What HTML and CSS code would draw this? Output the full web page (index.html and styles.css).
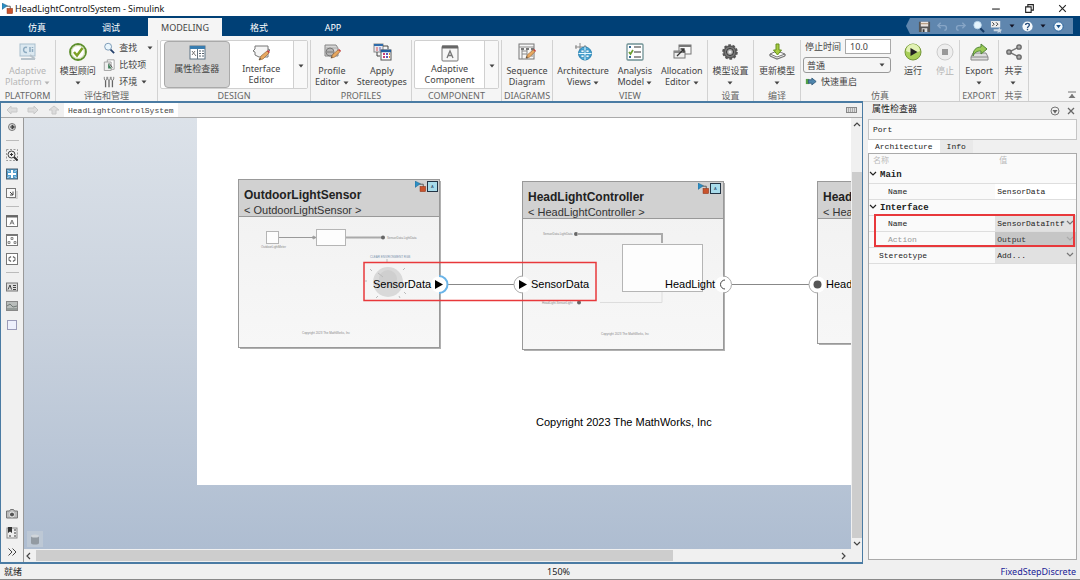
FILE: index.html
```html
<!DOCTYPE html>
<html lang="en">
<head>
  <meta charset="UTF-8">
  <title>HeadLightControlSystem - Simulink</title>
  <link rel="stylesheet" href="styles.css">
</head>
<body>
  <svg class="defs" aria-hidden="true">
    <defs>
      <symbol id="caret" viewBox="0 0 6 4"><path d="M0.5 0.5h5L3 3.5z" fill="currentColor"/></symbol>
      <symbol id="chevron" viewBox="0 0 8 6"><path d="M1 1l3 3 3-3" fill="none" stroke="currentColor" stroke-width="1.2"/></symbol>
      <symbol id="pencil" viewBox="0 0 12 12">
        <path d="M1 11l2-4 6-5 2 2-6 6z" fill="#e8a860" stroke="#95683a" stroke-width=".7"/>
        <path d="M9 2l2 2 1-1-2-2z" fill="#c9373c"/>
        <path d="M1 11l1-2 1 1z" fill="#333"/>
      </symbol>
      <symbol id="model" viewBox="0 0 12 12">
        <path d="M0 0l6 3-6 4z" fill="#2d8fc4" stroke="#1d5f88" stroke-width=".5"/>
        <path d="M5 3.5h4v3" fill="none" stroke="#555"/>
        <rect x="5.5" y="6" width="6" height="5.5" fill="#c9532c" stroke="#8d3417" stroke-width=".6"/>
      </symbol>
    </defs>
  </svg>

  <header class="titlebar">
    <svg class="app-icon"><use href="#model"/></svg>
    <h1>HeadLightControlSystem - Simulink</h1>
    <div class="window-buttons">
      <button aria-label="Minimize"><svg viewBox="0 0 10 10"><path d="M1 5.5h7"/></svg></button>
      <button aria-label="Restore"><svg viewBox="0 0 10 10"><path d="M1.5 3.5h5v5h-5zM3.5 3.5v-2h5v5h-2"/></svg></button>
      <button aria-label="Close"><svg viewBox="0 0 10 10"><path d="M2 2l6 6M8 2L2 8"/></svg></button>
    </div>
  </header>

  <nav class="tabs">
    <button>仿真</button>
    <button>调试</button>
    <button class="active">MODELING</button>
    <button>格式</button>
    <button>APP</button>
    <div class="quick">
      <button aria-label="Save"><svg viewBox="0 0 14 14"><path d="M1 2h12v11H1z" fill="#555"/><path d="M3 2h8v5H3z" fill="#e9e4e0"/><path d="M3 4h8" stroke="#a86"/><path d="M4 9h6v4H4z" fill="#ddd"/><path d="M5 10h2v3H5z" fill="#333"/></svg></button>
      <button aria-label="Undo"><svg viewBox="0 0 14 14"><path d="M5 3L2 6l3 3M2.5 6H9c3 0 3 5 0 5" fill="none" stroke="#86a5c6" stroke-width="1.5"/></svg></button>
      <button aria-label="Redo"><svg viewBox="0 0 14 14"><path d="M9 3l3 3-3 3M11.5 6H5c-3 0-3 5 0 5" fill="none" stroke="#86a5c6" stroke-width="1.5"/></svg></button>
      <button aria-label="Find"><svg viewBox="0 0 14 14"><path d="M8 8l5 5" stroke="#173b66" stroke-width="2.2"/><circle cx="6" cy="5.5" r="4" fill="#e4f4fd" stroke="#bdd9ee"/></svg></button>
      <button aria-label="Shortcuts"><svg viewBox="0 0 14 14"><path d="M1 1h10v7H1z" fill="#eee"/><path d="M2.5 2.5l2 2-2 2M6.5 2.5l2 2-2 2" fill="none" stroke="#333"/><path d="M4 10h5l1-2 1 2 2 .5-1.500 1.500.5 2-2-1-2 1 .3-2H4z" fill="#c8d5e2"/></svg></button>
      <svg class="caret"><use href="#caret"/></svg>
      <button aria-label="Help"><svg viewBox="0 0 14 14"><circle cx="7" cy="7" r="5.5" fill="#f4f8fb"/><path d="M5 5.5c0-2.500 4-2.500 4 0C9 7 7 7 7 8.500M7 9.500v1.500" fill="none" stroke="#2b5180" stroke-width="1.5"/></svg></button>
      <svg class="caret"><use href="#caret"/></svg>
      <button aria-label="More"><svg viewBox="0 0 14 14"><circle cx="7" cy="7" r="5" fill="#eef5fb" stroke="#23609c"/><path d="M4.5 5.5h5L7 9z" fill="#174f86"/></svg></button>
    </div>
  </nav>

  <div class="ribbon">
    <section class="group">
      <div class="tools">
        <button class="tool" disabled>
          <svg viewBox="0 0 20 20"><rect x="2" y="2" width="15" height="12" fill="#dbe8f0" stroke="#a9bfce"/><path d="M9 5.5c-4-2-5 6 0 5M12 5v5M14.5 5v1M14.5 7v3" fill="none" stroke="#8eabc0" stroke-width="1.5"/><path d="M3 17h14M12 13l5 4" stroke="#b8c3cb" stroke-width="2"/></svg>
          <span>Adaptive<br>Platform <svg class="caret"><use href="#caret"/></svg></span>
        </button>
      </div>
      <h2>PLATFORM</h2>
    </section>

    <section class="group">
      <div class="tools">
        <button class="tool">
          <svg viewBox="0 0 20 20"><circle cx="10" cy="10" r="8" fill="#fff" stroke="#5c8f2c" stroke-width="1.8"/><circle cx="10" cy="10" r="6.5" fill="none" stroke="#c7d7a5"/><path d="M6 10l3 3.500L14.500 6" fill="none" stroke="#7ea126" stroke-width="2.5"/></svg>
          <span>模型顾问<br><svg class="caret"><use href="#caret"/></svg></span>
        </button>
        <div class="stack">
          <button><svg viewBox="0 0 14 14"><path d="M8 8l5 5" stroke="#24406b" stroke-width="2"/><circle cx="6" cy="5.5" r="4" fill="#eaf6fc" stroke="#6e8fae"/></svg>查找<svg class="caret end"><use href="#caret"/></svg></button>
          <button><svg viewBox="0 0 14 14"><path d="M5 1h8v11H5z" fill="#fff" stroke="#999"/><path d="M1.5 3.5h8v10h-8z" fill="#eee" stroke="#999"/><path d="M6 5v6h4z" fill="#3f7f59"/><path d="M7 5l4 5" stroke="#444"/></svg>比较项</button>
          <button><svg viewBox="0 0 14 14"><path d="M3 5v8M7 5v8M11 5v8" stroke="#666" stroke-width="1.5"/><path d="M1.5 1v2.500c0 2 3 2 3 0V1M5.5 1v2.500c0 2 3 2 3 0V1M9.5 1v2.500c0 2 3 2 3 0V1" fill="none" stroke="#777"/></svg>环境<svg class="caret"><use href="#caret"/></svg></button>
        </div>
      </div>
      <h2>评估和管理</h2>
    </section>

    <section class="group">
      <div class="gallery">
        <button class="tool pressed">
          <svg viewBox="0 0 20 20"><rect x="3" y="3" width="15" height="13" fill="#fff" stroke="#5e7485"/><path d="M3 3h15v3H3z" fill="#397db0"/><path d="M10.5 6v10" stroke="#65737e"/><path d="M5 8l4 5M8 8l-3 4" stroke="#777"/><path d="M12 8h2M15 8h2M12 10.5h2M15 10.5h2M12 13h2M15 13h2" stroke="#52606c"/></svg>
          <span>属性检查器</span>
        </button>
        <button class="tool">
          <svg viewBox="0 0 20 20"><path d="M4 3h13v11H8l-4-2V9L2 8l2-2z" fill="#f5f5f5" stroke="#777"/><path d="M17 6l2 1-2 2" fill="none" stroke="#777"/><use href="#pencil" x="7" y="6" width="12" height="12"/></svg>
          <span>Interface<br>Editor</span>
        </button>
        <button class="expand" aria-label="More design tools"><svg class="caret"><use href="#caret"/></svg></button>
      </div>
      <h2>DESIGN</h2>
    </section>

    <section class="group">
      <div class="tools">
        <button class="tool">
          <svg viewBox="0 0 20 20"><path d="M3 3h11l2 3v8H3z" fill="#d7d7d7" stroke="#858585"/><path d="M3 6h13" stroke="#aaa"/><circle cx="8" cy="10" r="4" fill="#f5f5f5" stroke="#777"/><path d="M8 6v8M4 10h8M6 7v6M10 7v6" stroke="#777"/><use href="#pencil" x="8" y="6" width="11" height="11"/></svg>
          <span>Profile<br>Editor <svg class="caret"><use href="#caret"/></svg></span>
        </button>
        <button class="tool">
          <svg viewBox="0 0 20 20"><rect x="2" y="2" width="9" height="8" fill="#e8e8f0" stroke="#888"/><path d="M2 3h9" stroke="#2f6cab" stroke-width="2"/><path d="M4 6h2M4 8h2" stroke="#d55"/><path d="M7 6h2M7 8h2" stroke="#66b"/><path d="M11 4h5v3M5 10v4h3" fill="none" stroke="#444"/><rect x="9" y="8" width="10" height="10" fill="#fff" stroke="#555"/><path d="M9 9h10" stroke="#245f9e" stroke-width="2.5"/><path d="M11 12h2M11 15h2" stroke="#cc3d73" stroke-width="2"/><path d="M14 12h2M14 15h2" stroke="#6558bd" stroke-width="2"/><path d="M17 12h1M17 15h1" stroke="#e28a33" stroke-width="2"/></svg>
          <span>Apply<br>Stereotypes</span>
        </button>
      </div>
      <h2>PROFILES</h2>
    </section>

    <section class="group">
      <div class="gallery">
        <button class="tool">
          <svg viewBox="0 0 20 20"><rect x="2" y="3" width="16" height="15" rx="1" fill="#f6f6f6" stroke="#777"/><path d="M2 4h16" stroke="#666" stroke-width="3"/><path d="M7 15l3-7 3 7M8 12.5h4" fill="none" stroke="#777" stroke-width="1.3"/></svg>
          <span>Adaptive<br>Component</span>
        </button>
        <button class="expand" aria-label="More components"><svg class="caret"><use href="#caret"/></svg></button>
      </div>
      <h2>COMPONENT</h2>
    </section>

    <section class="group">
      <div class="tools">
        <button class="tool">
          <svg viewBox="0 0 20 20"><rect x="2" y="2" width="15" height="15" fill="#f7f7f7" stroke="#777"/><path d="M2 5h15M5 7v10M10 7v10M15 7v8M5 9h5M10 12H5" fill="none" stroke="#888"/><path d="M4 7h3M9 7h3M14 7h3" stroke="#777" stroke-width="2"/><use href="#pencil" x="8" y="6" width="11" height="11"/></svg>
          <span>Sequence<br>Diagram</span>
        </button>
      </div>
      <h2>DIAGRAMS</h2>
    </section>

    <section class="group">
      <div class="tools">
        <button class="tool">
          <svg viewBox="0 0 20 20"><path d="M2 5h12M7 1v14M3 3v4M12 3v3" stroke="#888"/><circle cx="12" cy="11.5" r="6.5" fill="#4aa9d8" stroke="#277eae"/><path d="M12 5v13M5.5 11.5h13" stroke="#e9f8ff"/><path d="M8 8h3v2.500H8zM13 8h3v2.500h-3zM8 13h3v2.500H8zM13 13h3v2.500h-3z" fill="#eaf7fd" stroke="#277eae" stroke-width=".6"/></svg>
          <span>Architecture<br>Views <svg class="caret"><use href="#caret"/></svg></span>
        </button>
        <button class="tool">
          <svg viewBox="0 0 20 20"><rect x="2" y="2" width="16" height="16" rx="1" fill="#fff" stroke="#6f9194" stroke-width="1.3"/><path d="M9 5h7M9 10h7M9 15h7" stroke="#777" stroke-width="1.5"/><path d="M4 5h2M4 15h2" stroke="#376d97" stroke-width="2"/><path d="M4 10l1.500 2L8 8" fill="none" stroke="#6c9e31" stroke-width="1.7"/></svg>
          <span>Analysis<br>Model <svg class="caret"><use href="#caret"/></svg></span>
        </button>
        <button class="tool">
          <svg viewBox="0 0 20 20"><rect x="7" y="3" width="12" height="9" fill="#f9f9f9" stroke="#777"/><path d="M7 4h12" stroke="#777" stroke-width="2"/><rect x="2" y="9" width="11" height="7" fill="#eee" stroke="#777"/><path d="M2 10h11" stroke="#888" stroke-width="2"/><path d="M5 14l7-7M8.5 7H12v3.500" fill="none" stroke="#333" stroke-width="1.3"/></svg>
          <span>Allocation<br>Editor <svg class="caret"><use href="#caret"/></svg></span>
        </button>
      </div>
      <h2>VIEW</h2>
    </section>

    <section class="group">
      <div class="tools">
        <button class="tool">
          <svg viewBox="0 0 20 20"><circle cx="10" cy="10" r="6.8" fill="#777" stroke="#555" stroke-width="2" stroke-dasharray="2.6 1.7"/><circle cx="10" cy="10" r="5.8" fill="#777" stroke="#555"/><circle cx="10" cy="10" r="3.5" fill="#aaa" stroke="#333"/><circle cx="10" cy="10" r="1.5" fill="#eee"/></svg>
          <span>模型设置<br><svg class="caret"><use href="#caret"/></svg></span>
        </button>
      </div>
      <h2>设置</h2>
    </section>

    <section class="group">
      <div class="tools">
        <button class="tool">
          <svg viewBox="0 0 20 20"><path d="M3 12l7-3 8 3-8 3z" fill="#fff" stroke="#777"/><path d="M3 14l7 3 8-3M3 12v2M18 12v2" fill="none" stroke="#777" stroke-width="1.3"/><path d="M9 2h3v6h2.500L10.500 13 6.500 8H9z" fill="#a7cb40" stroke="#66901d"/></svg>
          <span>更新模型<br><svg class="caret"><use href="#caret"/></svg></span>
        </button>
      </div>
      <h2>编译</h2>
    </section>

    <section class="group">
      <div class="tools sim">
        <div class="sim-form">
          <label for="stopTime">停止时间</label>
          <input type="text" id="stopTime" value="10.0">
          <div class="combo">
            <select id="simMode" aria-label="仿真模式"><option>普通</option></select>
            <svg class="caret"><use href="#caret"/></svg>
          </div>
          <button class="restart"><svg viewBox="0 0 14 10"><path d="M1 2h4v6H1z" fill="#55a246"/><path d="M4 3h4V1l5 4-5 4V7H4z" fill="#4f86ad" stroke="#315a7b"/></svg>快速重启</button>
        </div>
        <button class="tool">
          <svg viewBox="0 0 20 20"><circle cx="10" cy="10" r="8" fill="#a8cf58" stroke="#76983a"/><path d="M3 9a7 7 0 0 1 14 0c-4 2-10 2-14 0z" fill="#e2f2b5"/><path d="M7.5 6l7 4-7 4z" fill="#222"/></svg>
          <span>运行</span>
        </button>
        <button class="tool" disabled>
          <svg viewBox="0 0 20 20"><circle cx="10" cy="10" r="8" fill="#eee" stroke="#ccc"/><path d="M7 7h6v6H7z" fill="#999"/></svg>
          <span>停止</span>
        </button>
      </div>
      <h2>仿真</h2>
    </section>

    <section class="group">
      <div class="tools">
        <button class="tool">
          <svg viewBox="0 0 20 20"><path d="M4 11h13l2 4v3H2v-3z" fill="#ddd" stroke="#888"/><path d="M2 15h17" stroke="#888"/><path d="M4 14c0-6 3-9 8-9V2l6 5-6 5V9c-4 0-6 1-8 5z" fill="#9bca56" stroke="#4f8337"/></svg>
          <span>Export<br><svg class="caret"><use href="#caret"/></svg></span>
        </button>
      </div>
      <h2>EXPORT</h2>
    </section>

    <section class="group">
      <div class="tools">
        <button class="tool">
          <svg viewBox="0 0 20 20"><path d="M15 5L5 10l10 5" fill="none" stroke="#777" stroke-width="1.5"/><g fill="#aaa" stroke="#666" stroke-width="1.3"><circle cx="15" cy="5" r="2.2"/><circle cx="5" cy="10" r="2.2"/><circle cx="15" cy="15" r="2.2"/></g></svg>
          <span>共享<br><svg class="caret"><use href="#caret"/></svg></span>
        </button>
      </div>
      <h2>共享</h2>
    </section>

    <div class="ribbon-end">
      <button aria-label="Minimize toolstrip"><svg viewBox="0 0 8 8"><path d="M0 1h8M4 3v4" stroke="#777"/><path d="M0.5 7L4 3l3.500 4z" fill="#777"/></svg></button>
    </div>
  </div>

  <main class="workspace">
    <section class="editor">
      <nav class="address">
        <button aria-label="Back"><svg viewBox="0 0 12 10"><path d="M1 5l4-4v2h6v4H5v2z"/></svg></button>
        <button aria-label="Forward"><svg viewBox="0 0 12 10"><path d="M11 5L7 1v2H1v4h6v2z"/></svg></button>
        <button aria-label="Up"><svg viewBox="0 0 12 10"><path d="M6 1l5 4H8v4H4V5H1z"/></svg></button>
        <a href="#model-root">HeadLightControlSystem</a>
        <button class="keyboard" aria-label="Keyboard"><svg viewBox="0 0 12 8"><rect x=".5" y="1.5" width="10" height="5" fill="#ddd" stroke="#888"/><path d="M2 3h8M2 5h7" stroke="#777" stroke-dasharray="1 1"/></svg></button>
      </nav>

      <aside class="palette">
        <button aria-label="Hide browser"><svg viewBox="0 0 12 12"><circle cx="6" cy="6" r="3.5" fill="#ddd" stroke="#777"/><path d="M4 6h3M6 4l2.500 2L6 8z" stroke="#444" fill="#444"/></svg></button>
        <hr>
        <button aria-label="Zoom"><svg viewBox="0 0 12 12"><path d="M.5 .5h11v11H.5z" fill="none" stroke="#999" stroke-dasharray="2 1.5"/><circle cx="5.5" cy="5.5" r="3.5" fill="#eee" stroke="#444"/><path d="M8 8l3.500 3.500" stroke="#333" stroke-width="2"/><path d="M5.5 4v3M4 5.500h3" stroke="#333"/></svg></button>
        <button aria-label="Fit to view"><svg viewBox="0 0 12 12"><rect x=".5" y="1" width="11" height="10" fill="#4f9bcb" stroke="#4d6070"/><path d="M5 2h2v3h3v2H7v3H5V7H2V5h3z" fill="#fff"/><path d="M1.500 2l2 2M10.500 2l-2 2M1.500 10l2-2M10.500 10l-2-2" stroke="#d8ebf7"/></svg></button>
        <button aria-label="Sample times"><svg viewBox="0 0 12 12"><rect x=".5" y="1.5" width="9" height="9" fill="#f8f8f8" stroke="#777"/><path d="M4 5l3 3M7 4.500V8H4" fill="none" stroke="#444"/><path d="M11 4v8H3" fill="none" stroke="#bbb"/></svg></button>
        <hr>
        <button aria-label="Component"><svg viewBox="0 0 12 12"><rect x=".5" y=".5" width="11" height="11" fill="#fff" stroke="#777"/><path d="M0 1.500h12" stroke="#666" stroke-width="2"/><path d="M4 9.500L6 5l2 4.500M5 8h2" fill="none" stroke="#777"/></svg></button>
        <button aria-label="Reference component"><svg viewBox="0 0 12 12"><rect x=".5" y=".5" width="11" height="11" fill="#fff" stroke="#777"/><path d="M0 1h12" stroke="#777" stroke-width="2"/><path d="M5 3.500h2v2H5zM2 7.500h2v2H2zM8 7.500h2v2H8z" fill="#eee" stroke="#888"/></svg></button>
        <button aria-label="Adapter"><svg viewBox="0 0 12 12"><rect x=".5" y=".5" width="11" height="11" fill="#fff" stroke="#777"/><path d="M2.500 5.500L5 3.500M7 3.500l2.500 2M9.500 6.500L7 8.500M5 8.500l-2.500-2" stroke="#666" stroke-width="1.3"/></svg></button>
        <hr>
        <button aria-label="Annotation"><svg viewBox="0 0 12 12"><rect x=".5" y="2" width="11" height="8" fill="#ddd" stroke="#777"/><path d="M2 8.500L4 4l1.500 4.500M7 4.500h3M7 6.500h3M7 8.500h3" fill="none" stroke="#444"/></svg></button>
        <button aria-label="Image"><svg viewBox="0 0 12 12"><rect x=".5" y="1.5" width="11" height="9" fill="#b9bdbb" stroke="#888"/><path d="M1 6l3-2 3 3 4-1M1 9h10" fill="none" stroke="#707a77"/></svg></button>
        <button aria-label="Area"><svg viewBox="0 0 12 12"><rect x="1.5" y="1.5" width="9" height="9" fill="#eef0fc" stroke="#9b9bb8"/></svg></button>
        <button class="bottom" aria-label="Snapshot"><svg viewBox="0 0 12 12"><path d="M.5 3h3l1-1.500h3l1 1.500h3v7H.5z" fill="#bbb" stroke="#777"/><circle cx="6" cy="6.5" r="2.5" fill="#555" stroke="#eee"/></svg></button>
        <button aria-label="Bookmarks"><svg viewBox="0 0 12 12"><rect x="1" y="1" width="10" height="10" fill="#eee" stroke="#888"/><path d="M2 0h4v6L4 4.500 2 6z" fill="#333"/><path d="M8 3h2M8 6h2M3 9h2M8 9h2" stroke="#777" stroke-width="1.5"/></svg></button>
        <button aria-label="Expand palette"><svg viewBox="0 0 12 12"><path d="M2.500 2.500L6 6 2.500 9.500M6.500 2.500L10 6 6.500 9.500" fill="none" stroke="#444"/></svg></button>
      </aside>

      <div class="canvas" id="model-root">
        <svg class="diagram" width="827" height="431" viewBox="24 118 827 431">
          <defs>
            <linearGradient id="body" x1="0" y1="0" x2="0" y2="1"><stop offset="0" stop-color="#f1f1f1"/><stop offset="1" stop-color="#f7f7f7"/></linearGradient>
          </defs>
          <path d="M197 118h800v367H197z" fill="#fff"/>

          <!-- OutdoorLightSensor -->
          <g class="block">
            <rect class="shadow" x="240" y="181" width="201" height="168"/>
            <rect class="frame" x="238.5" y="179.5" width="201" height="168"/>
            <rect class="head" x="238.5" y="179.5" width="201" height="37"/>
            <text class="name" x="244" y="199">OutdoorLightSensor</text>
            <text class="type" x="244" y="214">&lt; OutdoorLightSensor &gt;</text>
            <use href="#model" x="415" y="181" width="11" height="11"/>
            <rect class="badge" x="427.5" y="181.5" width="10" height="10"/>
            <text class="badge-text" x="431" y="188">A</text>
          </g>
          <g class="preview">
            <rect x="266.5" y="231.5" width="12" height="12"/>
            <path d="M279 237.500h36M313 236l3 1.500-3 1.500z"/>
            <rect x="316.5" y="229.5" width="29" height="16"/>
            <path class="bus" d="M346 237.500h36"/>
            <circle class="dot" cx="383" cy="237.5" r="2"/>
            <text x="387" y="239">SensorData.LightData</text>
            <text x="261" y="248">OutdoorLightMeter</text>
            <text class="blue" x="370" y="258">CLEAR ENVIRONMENT RGB</text>
            <circle class="knob" cx="388" cy="282" r="15"/>
            <circle class="knob-top" cx="388" cy="279" r="9"/>
            <path class="ticks" d="M387 262v-3M403 270l2-2M372 271l-2-2M367 281h-2M404 292l2 2M378 296l-2 2M399 296l1 2M378 273l5 4"/>
            <text x="302" y="334">Copyright 2023 The MathWorks, Inc</text>
          </g>

          <!-- HeadLightController -->
          <g class="block">
            <rect class="shadow" x="524" y="183" width="201" height="168"/>
            <rect class="frame" x="522.5" y="181.5" width="201" height="168"/>
            <rect class="head" x="522.5" y="181.5" width="201" height="37"/>
            <text class="name" x="528" y="201">HeadLightController</text>
            <text class="type" x="528" y="216">&lt; HeadLightController &gt;</text>
            <use href="#model" x="698" y="183" width="11" height="11"/>
            <rect class="badge" x="710.5" y="183.5" width="10" height="10"/>
            <text class="badge-text" x="714" y="190">A</text>
          </g>
          <g class="preview">
            <text x="543" y="235">SensorData.LightData</text>
            <circle class="dot" cx="576" cy="234" r="2"/>
            <path class="bus" d="M577 234h85v9"/>
            <path class="faint" d="M600 302.500h62v-12"/>
            <rect x="622.5" y="244.5" width="80" height="47"/>
            <text x="542" y="304">HeadLight.SensorLight</text>
            <circle class="dot" cx="579" cy="302.5" r="2"/>
            <text x="601" y="335">Copyright 2023 The MathWorks, Inc</text>
          </g>

          <!-- third block, runs past the right edge -->
          <g class="block">
            <rect class="shadow" x="819" y="183" width="201" height="162"/>
            <rect class="frame" x="817.5" y="181.5" width="201" height="162"/>
            <rect class="head" x="817.5" y="181.5" width="201" height="37"/>
            <text class="name" x="823" y="201">Head</text>
            <text class="type" x="823" y="216">&lt; Hea</text>
          </g>

          <!-- connections and ports -->
          <path class="wire" d="M448 284.500h66M732 284.500h77"/>
          <g class="port">
            <circle cx="439" cy="284.5" r="8"/>
            <circle cx="522.5" cy="284.5" r="8"/>
            <circle cx="723" cy="284.5" r="8"/>
            <circle cx="817.5" cy="284.5" r="8"/>
          </g>
          <path class="rim selected" d="M439 276a8.500 8.500 0 0 1 0 17"/>
          <path class="rim" d="M522.500 276a8.500 8.500 0 0 0 0 17M723 276a8.500 8.500 0 0 1 0 17M817.500 276a8.500 8.500 0 0 0 0 17"/>
          <path d="M435 280l8 4.500-8 4.500z"/>
          <path d="M519 280l8 4.500-8 4.500z"/>
          <path d="M725 280a4.500 4.500 0 0 0 0 9" fill="none" stroke="#444"/>
          <circle cx="817.5" cy="284.5" r="4" fill="#555"/>
          <text class="label" x="373" y="288">SensorData</text>
          <text class="label" x="531" y="288">SensorData</text>
          <text class="label" x="665" y="288">HeadLight</text>
          <text class="label" x="826" y="288">Head</text>
          <text class="label" x="536" y="426">Copyright 2023 The MathWorks, Inc</text>
          <rect class="mark" x="364" y="262.5" width="232" height="38"/>
        </svg>
        <button class="model-data" aria-label="Model data"><svg viewBox="0 0 14 14"><path d="M3 4v7c0 2 8 2 8 0V4z" fill="#929aa2"/><ellipse cx="7" cy="4" rx="4" ry="1.5" fill="#d0d5da"/></svg></button>
      </div>

      <div class="scroll vertical">
        <svg class="up"><use href="#chevron"/></svg>
        <div class="thumb"></div>
        <svg><use href="#chevron"/></svg>
      </div>
      <div class="scroll horizontal">
        <svg class="left"><use href="#chevron"/></svg>
        <div class="thumb"></div>
        <svg class="right"><use href="#chevron"/></svg>
      </div>
    </section>

    <aside class="inspector">
      <header>
        <h2>属性检查器</h2>
        <button aria-label="Panel menu"><svg viewBox="0 0 10 10"><circle cx="5" cy="5" r="4" fill="none" stroke="#777"/><path d="M2.500 4h5L5 7.500z" fill="#666"/></svg></button>
        <button aria-label="Close panel"><svg viewBox="0 0 10 10"><path d="M2 2l6 6M8 2L2 8" stroke="#666" stroke-width="1.3"/></svg></button>
      </header>
      <div class="object-name">Port</div>
      <div class="inspector-tabs">
        <button class="active">Architecture</button>
        <button>Info</button>
      </div>
      <div class="properties">
        <table>
          <thead>
            <tr><th>名称</th><th>值</th></tr>
          </thead>
          <tbody>
            <tr class="category"><th colspan="2"><svg><use href="#chevron"/></svg>Main</th></tr>
            <tr><td class="child">Name</td><td><input type="text" aria-label="Name" value="SensorData"></td></tr>
            <tr class="category"><th colspan="2"><svg><use href="#chevron"/></svg>Interface</th></tr>
            <tr><td class="child">Name</td><td class="pick"><div class="combo"><select aria-label="Interface name"><option>SensorDataIntf</option></select><svg><use href="#chevron"/></svg></div></td></tr>
            <tr class="off"><td class="child">Action</td><td class="pick"><div class="combo"><select aria-label="Action" disabled><option>Output</option></select><svg><use href="#chevron"/></svg></div></td></tr>
            <tr><td class="root">Stereotype</td><td class="pick"><div class="combo"><select aria-label="Stereotype"><option>Add...</option></select><svg><use href="#chevron"/></svg></div></td></tr>
          </tbody>
        </table>
        <div class="highlight"></div>
      </div>
    </aside>
  </main>

  <footer class="status">
    <span>就绪</span>
    <span>150%</span>
    <a href="#solver">FixedStepDiscrete</a>
  </footer>
</body>
</html>
```

FILE: styles.css
```css
* {
  box-sizing: border-box;
}
body {
  margin: 0;
  height: 100vh;
  display: flex;
  flex-direction: column;
  overflow: hidden;
  background: #f0f0f0;
  color: #444;
  font-family: "Noto Sans", "Noto Sans CJK SC", sans-serif;
  font-size: 9px;
  line-height: 11px;
}
h1, h2 {
  margin: 0;
  font-size: inherit;
  font-weight: normal;
}
button, input, select {
  margin: 0;
  padding: 0;
  border: none;
  background: none;
  color: inherit;
  font: inherit;
}
svg {
  display: block;
  flex: none;
}
a {
  color: inherit;
  text-decoration: none;
}
.defs {
  position: absolute;
  width: 0;
  height: 0;
}
.caret {
  display: inline-block;
  width: 6px;
  height: 4px;
  vertical-align: middle;
}

/* title bar */
.titlebar {
  height: 16px;
  display: flex;
  align-items: center;
  gap: 2px;
  padding: 0 12px 0 2px;
  background: #fff;
  color: #111;
}
.app-icon {
  width: 11px;
  height: 11px;
}
.window-buttons {
  display: flex;
  gap: 22px;
  margin-left: auto;
}
.window-buttons svg {
  width: 11px;
  height: 11px;
  fill: none;
  stroke: #222;
}

/* toolstrip tabs */
.tabs {
  height: 20px;
  display: flex;
  align-items: flex-end;
  padding-right: 7px;
  background: #004076;
  color: #fff;
}
.tabs > button {
  width: 74px;
  height: 18px;
}
.tabs > .active {
  background: #f5f5f5;
  color: #444;
}
.quick {
  display: flex;
  align-items: center;
  gap: 5px;
  height: 16px;
  margin: 0 0 2px auto;
  padding: 0 8px 0 12px;
  background: #5f86ae;
  color: #112;
  clip-path: polygon(4px 0, 100% 0, 100% 100%, 4px 100%, 0 50%);
}
.quick .caret {
  margin: 0 1px;
}
.quick button svg {
  width: 13px;
  height: 13px;
}

/* ribbon */
.ribbon {
  height: 65px;
  flex: none;
  display: grid;
  grid-template-columns: 56px 102px 153px 101px 90px 51px 155px 46px 47px 159px 39px 30px 1fr;
  padding-top: 4px;
  background: #f5f5f5;
}
.group {
  display: flex;
  flex-direction: column;
  justify-content: space-between;
  border-right: 1px solid #d2d2d2;
}
.group h2 {
  text-align: center;
  color: #666;
  white-space: nowrap;
}
.tools {
  display: flex;
  justify-content: space-around;
  padding-top: 2px;
}
.tools.sim {
  justify-content: flex-start;
  gap: 12px;
  padding-left: 2px;
}
.tool {
  display: flex;
  flex-direction: column;
  align-items: center;
  gap: 3px;
  white-space: nowrap;
}
.tool > svg {
  width: 20px;
  height: 20px;
}
.tool:disabled {
  color: #b5b5b5;
}
.stack {
  display: flex;
  flex-direction: column;
  gap: 4px;
  width: 50px;
  margin-top: -1px;
}
.stack button {
  display: flex;
  align-items: center;
  gap: 4px;
  height: 13px;
}
.stack button svg:first-child {
  width: 12px;
  height: 12px;
}
.stack .end {
  margin-left: auto;
}
.gallery {
  display: flex;
  height: 49px;
  margin: 0 2px;
  border: 1px solid #d0d0d0;
  border-radius: 2px;
  background: #fff;
}
.gallery .tool {
  flex: 1;
  padding-top: 2px;
  gap: 0;
}
.gallery .pressed {
  margin-left: 3px;
  padding-top: 1px;
  border: 1px solid #aaa;
  border-radius: 4px;
  background: #d3d3d3;
}
.expand {
  width: 14px;
  border-left: 1px solid #d0d0d0;
  background: #f8f8f8;
}
.sim-form {
  display: grid;
  grid-template-columns: 42px 46px;
  row-gap: 3px;
  align-items: center;
  margin-top: -3px;
}
.sim-form label {
  padding-left: 2px;
}
.sim-form input {
  width: 46px;
  height: 15px;
  padding-left: 4px;
  border: 1px solid #aaa;
  background: #fff;
}
.combo {
  display: grid;
  align-items: center;
}
.combo > * {
  grid-area: 1 / 1;
}
.combo > svg {
  justify-self: end;
  pointer-events: none;
}
.combo select {
  width: 100%;
  appearance: none;
}
.sim-form .combo {
  grid-column: 1 / 3;
}
.sim-form select {
  height: 16px;
  padding-left: 3px;
  border: 1px solid #999;
  border-radius: 3px;
}
.sim-form .caret {
  margin-right: 6px;
}
.restart {
  grid-column: 1 / 3;
  display: flex;
  align-items: center;
  gap: 4px;
  padding-left: 2px;
}
.restart svg {
  width: 12px;
  height: 9px;
}
.ribbon-end {
  display: flex;
  align-items: flex-end;
  justify-content: flex-end;
  padding: 0 4px 2px 0;
}
.ribbon-end svg {
  width: 8px;
  height: 8px;
}

/* workspace */
.workspace {
  flex: 1;
  min-height: 0;
  display: grid;
  grid-template-columns: 1fr 217px;
}
.editor {
  min-width: 0;
  min-height: 0;
  display: grid;
  grid-template-columns: 23px 1fr 11px;
  grid-template-rows: 15px 1fr 13px;
  border: 2px solid #4a7ba3;
  border-left-width: 1px;
  border-right-width: 1px;
}
.address {
  grid-column: 1 / 4;
  display: flex;
  align-items: center;
  gap: 9px;
  padding: 0 4px 0 5px;
  border-bottom: 1px solid #aaa;
  font-family: "Liberation Mono", "Noto Sans CJK SC", monospace;
  font-size: 8px;
}
.address svg {
  width: 12px;
  height: 10px;
  fill: #dcdcdc;
  stroke: #c8c8c8;
}
.address a {
  height: 14px;
  margin-left: -5px;
  padding: 0 4px;
  background: #fff;
  line-height: 15px;
}
.keyboard {
  margin-left: auto;
}
.palette {
  grid-row: 2 / 4;
  display: flex;
  flex-direction: column;
  align-items: center;
  gap: 7px;
  padding: 3px 0 4px;
  border-right: 1px solid #999;
}
.palette svg {
  width: 12px;
  height: 12px;
}
.palette hr {
  width: 13px;
  margin: 0 0 1px;
  border: none;
  border-top: 1px solid #bbb;
}
.palette .bottom {
  margin-top: auto;
}
.canvas {
  position: relative;
  min-width: 0;
  min-height: 0;
  overflow: hidden;
  background: linear-gradient(#dce2e9, #c8d1dd 50%, #aebdd1);
}
.model-data {
  position: absolute;
  left: 3px;
  bottom: 2px;
  padding: 1px;
  background: #bdc8d5;
}
.model-data svg {
  width: 14px;
  height: 14px;
}
.scroll {
  display: flex;
  align-items: center;
  justify-content: space-between;
  color: #444;
  background: #f0f0f0;
}
.scroll svg {
  width: 8px;
  height: 6px;
}
.scroll .thumb {
  background: #cdcdcd;
}
.vertical {
  flex-direction: column;
  padding: 3px 0 2px;
}
.vertical .thumb {
  width: 10px;
  height: 86%;
  margin: auto 0 3px;
}
.horizontal .thumb {
  width: 77%;
  height: 11px;
  margin: 0 auto 0 4px;
}
.horizontal .right {
  margin-right: 3px;
}
.up {
  transform: rotate(180deg);
}
.left {
  transform: rotate(90deg);
}
.right {
  transform: rotate(-90deg);
}

/* diagram */
.diagram {
  font-family: "Liberation Sans", Arial, sans-serif;
}
.shadow {
  fill: #b0b0b0;
}
.frame {
  fill: url(#body);
  stroke: #999;
}
.head {
  fill: #d1d1d1;
  stroke: #999;
}
.name {
  font-size: 12px;
  font-weight: bold;
  fill: #222;
}
.type {
  font-size: 11px;
  fill: #333;
}
.label {
  font-size: 11px;
  fill: #000;
}
.badge {
  fill: #a9dceb;
  stroke: #234;
}
.badge-text {
  font-size: 4px;
  fill: #246;
}
.preview {
  font-size: 3px;
  fill: #888;
}
.preview rect {
  fill: #fdfdfd;
  stroke: #b5b5b5;
}
.preview path {
  fill: none;
  stroke: #999;
}
.preview .bus {
  stroke: #aaa;
  stroke-width: 2;
}
.preview .faint {
  stroke: #ddd;
}
.preview .ticks {
  stroke: #bbb;
}
.dot {
  fill: #666;
}
.preview .blue {
  fill: #7a93ad;
}
.knob {
  fill: #d9d9d9;
}
.knob-top {
  fill: #cfcfcf;
}
.wire {
  stroke: #888;
}
.port {
  fill: #fff;
}
.rim {
  fill: none;
  stroke: #aaa;
}
.rim.selected {
  stroke: #6ab4e8;
  stroke-width: 2;
}
.mark {
  fill: none;
  stroke: #e8383b;
  stroke-width: 1.5;
}

/* property inspector */
.inspector {
  display: flex;
  flex-direction: column;
  padding: 0 3px 4px 5px;
  border-top: 1px solid #ccc;
  font-family: "Liberation Mono", "Noto Sans CJK SC", monospace;
  font-size: 8px;
  color: #222;
}
.inspector header {
  display: flex;
  align-items: center;
  gap: 6px;
  height: 17px;
  padding: 0 1px 0 4px;
}
.inspector header h2 {
  flex: 1;
  font-size: 9px;
}
.inspector header svg {
  width: 10px;
  height: 10px;
}
.object-name {
  height: 21px;
  padding-left: 4px;
  border: 1px solid #c5c5c5;
  background: #fafafa;
  line-height: 20px;
}
.inspector-tabs {
  display: flex;
  height: 13px;
}
.inspector-tabs button {
  padding: 0 7px;
  background: #e9e9e9;
}
.inspector-tabs .active {
  background: #fff;
}
.properties {
  position: relative;
  flex: 1;
  border: 1px solid #aaa;
  background: #fafafa;
}
.properties table {
  width: 100%;
  table-layout: fixed;
  border-collapse: collapse;
}
.properties th,
.properties td {
  height: 16px;
  padding: 0;
  border-bottom: 1px solid #dedede;
  text-align: left;
  font-weight: normal;
}
.properties th:first-child {
  width: 61%;
}
.properties thead th {
  height: 13px;
  padding-left: 4px;
  border: none;
  color: #bbb;
}
.properties .category th {
  padding-top: 2px;
  font-size: 9px;
  font-weight: bold;
}
.category svg {
  display: inline-block;
  width: 8px;
  height: 6px;
  margin-right: 3px;
}
.properties .child {
  padding-left: 19px;
}
.properties .root {
  padding-left: 10px;
}
.properties input {
  display: block;
  width: 100%;
  height: 15px;
  padding-left: 2px;
  background: #fff;
}
.properties .pick {
  background: #e1e1e1;
}
.pick select {
  height: 15px;
  padding-left: 2px;
}
.pick select:disabled {
  color: #333;
  opacity: 1;
}
.pick svg {
  width: 8px;
  height: 6px;
  margin-right: 2px;
  color: #777;
}
.properties .off {
  color: #999;
}
.off .pick {
  background: #c6c6c6;
}
.off svg {
  color: #aaa;
}
.highlight {
  position: absolute;
  top: 60px;
  left: 5px;
  right: 1px;
  height: 33px;
  border: 2px solid #e8383b;
}

/* status bar */
.status {
  height: 16px;
  display: grid;
  grid-template-columns: 15fr auto 14fr;
  align-items: center;
  padding: 0 4px 1px;
  border-bottom: 1px solid #888;
  color: #222;
}
.status > :nth-child(2) {
  padding-left: 1px;
}
.status a {
  justify-self: end;
  color: #1c1c96;
}
```
